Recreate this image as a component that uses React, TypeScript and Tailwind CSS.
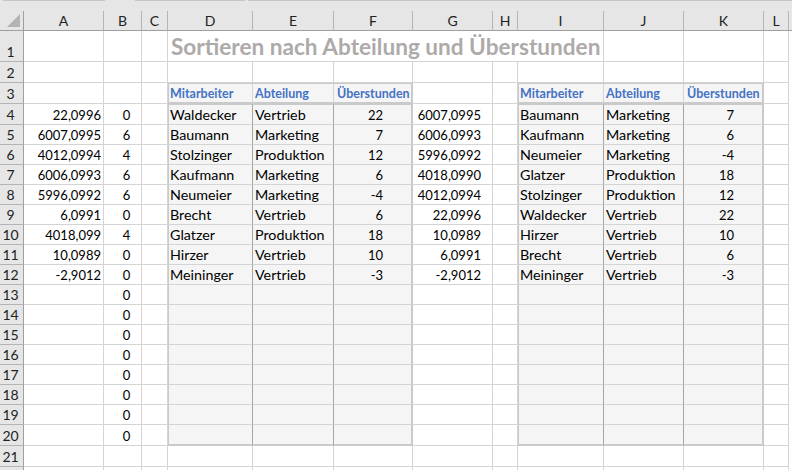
import React from "react";

const colHeads = ["A", "B", "C", "D", "E", "F", "G", "H", "I", "J", "K", "L"];

const aVals = ["22,0996", "6007,0995", "4012,0994", "6006,0993", "5996,0992", "6,0991", "4018,099", "10,0989", "-2,9012"];
const bVals = ["0", "6", "4", "6", "6", "0", "4", "0", "0", "0", "0", "0", "0", "0", "0", "0", "0"];
const gVals = ["6007,0995", "6006,0993", "5996,0992", "4018,0990", "4012,0994", "22,0996", "10,0989", "6,0991", "-2,9012"];
const left = [
  ["Waldecker", "Vertrieb", "22"],
  ["Baumann", "Marketing", "7"],
  ["Stolzinger", "Produktion", "12"],
  ["Kaufmann", "Marketing", "6"],
  ["Neumeier", "Marketing", "-4"],
  ["Brecht", "Vertrieb", "6"],
  ["Glatzer", "Produktion", "18"],
  ["Hirzer", "Vertrieb", "10"],
  ["Meininger", "Vertrieb", "-3"],
];
const right = [
  ["Baumann", "Marketing", "7"],
  ["Kaufmann", "Marketing", "6"],
  ["Neumeier", "Marketing", "-4"],
  ["Glatzer", "Produktion", "18"],
  ["Stolzinger", "Produktion", "12"],
  ["Waldecker", "Vertrieb", "22"],
  ["Hirzer", "Vertrieb", "10"],
  ["Brecht", "Vertrieb", "6"],
  ["Meininger", "Vertrieb", "-3"],
];

const grid = "border-r border-b border-[#d4d4d4]";
const rowHead = "flex items-end justify-center pr-[2px] bg-[#e6e6e6] border-r border-b border-r-[#9f9f9f] border-b-[#b4b4b4] text-[14px] leading-[19px] text-[#222222]";

function Plain({ className = "", children }: { className?: string; children?: React.ReactNode }) {
  return <div className={`${grid} flex items-center pt-[2px] text-[13px] text-black ${className}`}>{children}</div>;
}

function bodyCell(col: number, row: number, text: string | undefined) {
  const isLast = row === 16;
  const top = row === 0 ? "border-t border-t-[#cacaca]" : "";
  const bottom = isLast ? "border-b-2 border-b-[#cacaca]" : "border-b border-b-[#d4d4d4]";
  if (col === 0) {
    return (
      <div className={`bg-[#f5f5f5] flex items-center pt-[2px] pl-[1px] text-[14.3px] border-l border-l-[#cacaca] border-r border-r-[#a6a6a6] ${top} ${bottom}`}>{text}</div>
    );
  }
  if (col === 1) {
    return (
      <div className={`bg-[#f5f5f5] flex items-center pt-[2px] pl-[2px] text-[14.3px] border-r border-r-[#a6a6a6] ${top} ${bottom}`}>{text}</div>
    );
  }
  return (
    <div className={`bg-[#f5f5f5] flex items-center pt-[2px] justify-end pr-[28px] text-[13px] border-r-2 border-r-[#cacaca] ${top} ${bottom}`}>{text}</div>
  );
}

export default function App() {
  const rows: React.ReactNode[] = [];
  for (let i = 0; i < 17; i++) {
    const rowNo = i + 4;
    rows.push(
      <React.Fragment key={rowNo}>
        <div className={rowHead}>{rowNo}</div>
        <Plain className="justify-end pr-[2px]">{aVals[i]}</Plain>
        <Plain className="justify-center pl-[8px]">{bVals[i]}</Plain>
        <Plain />
        {bodyCell(0, i, left[i]?.[0])}
        {bodyCell(1, i, left[i]?.[1])}
        {bodyCell(2, i, left[i]?.[2])}
        <Plain className="justify-end pr-[11px]">{gVals[i]}</Plain>
        <Plain />
        {bodyCell(0, i, right[i]?.[0])}
        {bodyCell(1, i, right[i]?.[1])}
        {bodyCell(2, i, right[i]?.[2])}
        <Plain />
        <div />
      </React.Fragment>
    );
  }

  const headCell = (label: string, kind: 0 | 1 | 2, key: string) => (
    <div
      key={key}
      className={`bg-[#f5f5f5] flex items-center pt-[2px] border-t border-t-[#cacaca] border-b-2 border-b-[#cacaca] text-[12.5px] font-bold text-[#4472c4] ${
        kind === 0 ? "pl-[1px] border-l border-l-[#cacaca] border-r border-r-[#d4d4d4]" : kind === 1 ? "pl-[2px] border-r border-r-[#d4d4d4]" : "pl-[3px] border-r-2 border-r-[#cacaca]"
      }`}
    >
      {label}
    </div>
  );

  return (
    <div className="w-[792px] h-[470px] overflow-hidden bg-white font-['Lato','Liberation_Sans',sans-serif]">
      <div className="h-[11px] bg-[#e6e6e6] flex items-start">
        <div className="h-[1px] w-[3px]" />
        <div className="h-[1px] w-[102px] bg-[#c6c6c6]" />
        <div className="h-[1px] w-[30px]" />
        <div className="h-[1px] w-[110px] bg-[#c6c6c6]" />
        <div className="h-[1px] w-[3px]" />
        <div className="h-[1px] flex-1 bg-[#c6c6c6]" />
      </div>
      <div className="grid grid-cols-[24px_80px_38px_26px_85px_81px_79px_80px_25px_86px_80px_80px_25px_3px] grid-rows-[20px_31px_21px_21px_21px_repeat(15,20px)_21px_21px_20px] text-[14.5px] leading-none">
        {/* Column header row */}
        <div className="bg-[#e6e6e6] border-r border-b border-r-[#9f9f9f] border-b-[#9f9f9f] flex items-end justify-end pr-[3px] pb-[3px]">
          <svg width="13" height="13" viewBox="0 0 13 13">
            <polygon points="13,0 13,13 0,13" fill="#b4b4b4" />
          </svg>
        </div>
        {colHeads.map((c) => (
          <div key={c} className="bg-[#e6e6e6] border-b border-b-[#9f9f9f] border-r border-r-[#b4b4b4] flex items-center justify-center text-[14px] text-[#222222]">
            {c}
          </div>
        ))}
        <div className="bg-[#e6e6e6] border-b border-b-[#9f9f9f]" />

        {/* Row 1 */}
        <div className={rowHead}>1</div>
        <Plain />
        <Plain />
        <Plain />
        <div className={`${grid} col-span-6 flex items-center pt-[2px] pl-[3px] text-[22.6px] font-bold text-[#aeaaaa] whitespace-nowrap`}>
          Sortieren nach Abteilung und Überstunden
        </div>
        <Plain />
        <Plain />
        <Plain />
        <div />

        {/* Row 2 */}
        <div className={rowHead}>2</div>
        {[0, 1, 2, 3, 4, 5, 6, 7, 8, 9, 10, 11].map((i) => (
          <Plain key={i} />
        ))}
        <div />

        {/* Row 3 */}
        <div className={rowHead}>3</div>
        <Plain />
        <Plain />
        <Plain />
        {headCell("Mitarbeiter", 0, "d")}
        {headCell("Abteilung", 1, "e")}
        {headCell("Überstunden", 2, "f")}
        <Plain />
        <Plain />
        {headCell("Mitarbeiter", 0, "i")}
        {headCell("Abteilung", 1, "j")}
        {headCell("Überstunden", 2, "k")}
        <Plain />
        <div />

        {rows}

        {/* Row 21 */}
        <div className={rowHead}>21</div>
        {[0, 1, 2, 3, 4, 5, 6, 7, 8, 9, 10, 11].map((i) => (
          <Plain key={i} />
        ))}
        <div />

        {/* Row 22 stub */}
        <div className="bg-[#e6e6e6] border-r border-r-[#9f9f9f]" />
        {[0, 1, 2, 3, 4, 5, 6, 7, 8, 9, 10, 11].map((i) => (
          <div key={i} className="border-r border-[#d4d4d4]" />
        ))}
        <div />
      </div>
    </div>
  );
}
